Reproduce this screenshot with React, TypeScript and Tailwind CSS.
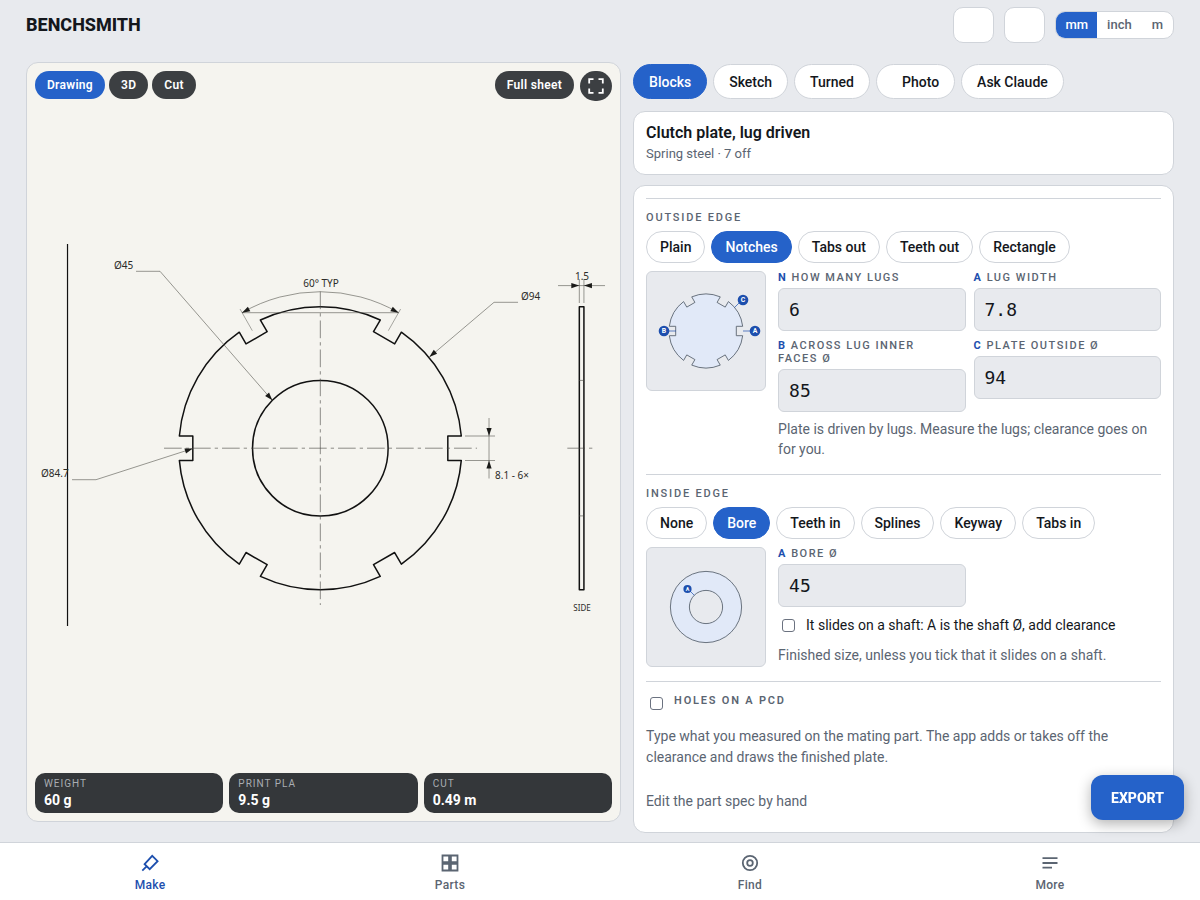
import * as React from 'react';
import { clsx } from 'clsx';

const NOTCH_ANGLES = [0, 60, 120, 180, 240, 300];

// Closed outline of a round plate with six square notches cut into the rim
function notchedPlate(cx: number, cy: number, outer: number, floor: number, half: number) {
  const rimX = Math.sqrt(outer * outer - half * half);
  const at = (x: number, y: number, deg: number) => {
    const a = (deg * Math.PI) / 180;
    const px = cx + x * Math.cos(a) - y * Math.sin(a);
    const py = cy + x * Math.sin(a) + y * Math.cos(a);
    return `${px.toFixed(2)} ${py.toFixed(2)}`;
  };

  const parts = NOTCH_ANGLES.map((deg, i) => {
    const enter = i === 0 ? `M${at(rimX, -half, deg)}` : `A${outer} ${outer} 0 0 1 ${at(rimX, -half, deg)}`;
    return `${enter}L${at(floor, -half, deg)}L${at(floor, half, deg)}L${at(rimX, half, deg)}`;
  });
  return `${parts.join('')}A${outer} ${outer} 0 0 1 ${at(rimX, -half, 0)}Z`;
}

function Arrow({ x, y, angle }: { x: number; y: number; angle: number }) {
  return <path d="M0 0L-8 -2.6L-8 2.6Z" fill="#1a1a18" transform={`translate(${x} ${y}) rotate(${angle})`} />;
}

function PlateDrawing() {
  return (
    <svg
      viewBox="35 101 577 672"
      className="min-h-0 w-full flex-1 overflow-visible"
      role="img"
      aria-label="Clutch plate drawing"
      fill="none"
    >
      <path d="M67.5 244V626" stroke="#111" strokeWidth="1.2" />

      {/* Face view */}
      <g stroke="#111" strokeWidth="1.5" strokeLinejoin="round">
        <path d={notchedPlate(320.3, 448.2, 141.5, 127.5, 12.2)} />
        <circle cx="320.3" cy="448.2" r="67.8" />
        <rect x="579.3" y="306.7" width="4.6" height="283" />
      </g>
      <g stroke="#44443f" strokeWidth="0.6">
        <path d="M579 380.4H584M579 515.9H584" />
        <path d="M164 448.2H477M320.3 291.5V605M567.3 448.2H592.7" strokeDasharray="17.7 4 3.3 4" />
      </g>

      {/* Dimension lines */}
      <g stroke="#55554f" strokeWidth="0.6">
        <path d="M242 312.7A156.5 156.5 0 0 1 398.6 312.7Z" />
        <path d="M240 309L252.3 330.7M400.6 309L388.3 330.7" strokeWidth="0.5" />
        <path d="M136 271.3H160L272 400" />
        <path d="M518 302.3H494L429.5 357" />
        <path d="M72 479.7H96L192.8 448.5" />
        <path d="M489 418V478.5M465 436H495M465 460.5H495" />
        <path d="M558 285.6H605M579.3 279V303M583.9 279V303" />
      </g>
      <Arrow x={242} y={312.7} angle={152} />
      <Arrow x={398.6} y={312.7} angle={28} />
      <Arrow x={272.3} y={400.3} angle={49} />
      <Arrow x={429.3} y={357} angle={140} />
      <Arrow x={192.8} y={448.5} angle={-18} />
      <Arrow x={489} y={436} angle={90} />
      <Arrow x={489} y={460.5} angle={-90} />
      <Arrow x={579.3} y={285.6} angle={0} />
      <Arrow x={583.9} y={285.6} angle={180} />

      <g fill="#2b2b28" fontFamily="'Noto Sans', sans-serif" fontSize="10">
        <text x="114" y="269">Ø45</text>
        <text x="321" y="287" textAnchor="middle">60° TYP</text>
        <text x="521" y="300">Ø94</text>
        <text x="41" y="477">Ø84.7</text>
        <text x="495" y="479">8.1 - 6×</text>
        <text x="582" y="280" textAnchor="middle">1.5</text>
        <text x="582" y="611" fontSize="8" textAnchor="middle">SIDE</text>
      </g>
    </svg>
  );
}

function Badge({ x, y, r, children }: { x: number; y: number; r: number; children: string }) {
  return (
    <>
      <circle cx={x} cy={y} r={r} fill="#1d4fae" />
      <text
        x={x}
        y={y + r * 0.45}
        fill="#fff"
        fontSize={r * 1.3}
        fontWeight="700"
        fontFamily="Roboto, sans-serif"
        textAnchor="middle"
      >
        {children}
      </text>
    </>
  );
}

function NotchDiagram() {
  return (
    <svg viewBox="0 0 118 118" className="size-full" role="img" aria-label="Notch dimensions">
      <path d={notchedPlate(59, 59, 37, 30.3, 4.7)} fill="#e1e9f8" stroke="#5b6572" strokeWidth="0.9" />
      <path d="M22 59H29M96 59H103M87.5 35.5L93 30" stroke="#1d4fae" strokeWidth="0.7" fill="none" />
      <Badge x={17} y={59} r={5.3}>B</Badge>
      <Badge x={108} y={59} r={5.3}>A</Badge>
      <Badge x={96} y={28} r={5.3}>C</Badge>
    </svg>
  );
}

function BoreDiagram() {
  return (
    <svg viewBox="0 0 118 118" className="size-full" role="img" aria-label="Bore dimensions">
      <circle cx="59" cy="59" r="35.6" fill="#e1e9f8" stroke="#5b6572" strokeWidth="0.9" />
      <circle cx="59" cy="59" r="16.6" fill="#e8eaee" stroke="#5b6572" strokeWidth="0.9" />
      <path d="M43 43L47.3 47.3" stroke="#1d4fae" strokeWidth="0.7" />
      <Badge x={40.5} y={41} r={4.1}>A</Badge>
    </svg>
  );
}

function ViewPill({ active, children }: { active?: boolean; children: React.ReactNode }) {
  return (
    <button
      type="button"
      className={clsx(
        'h-7 rounded-full px-3 text-xs font-semibold tracking-wide text-white',
        active ? 'bg-[#2562c9]' : 'bg-[#3c3f42]'
      )}
    >
      {children}
    </button>
  );
}

function Tab({ active, children }: { active?: boolean; children: React.ReactNode }) {
  return (
    <button
      type="button"
      className={clsx(
        'h-[35px] rounded-full border px-[15px] text-sm font-medium',
        active ? 'border-[#2562c9] bg-[#2562c9] text-white' : 'border-[#d0d4da] bg-white text-[#14171c]'
      )}
    >
      {children}
    </button>
  );
}

function ChipRow({ options, selected }: { options: string[]; selected: string }) {
  return (
    <div className="mt-[5px] flex flex-wrap gap-[6px]">
      {options.map((option) => (
        <button
          key={option}
          type="button"
          aria-pressed={option === selected}
          className={clsx(
            'h-8 rounded-full border px-[13px] text-sm font-medium',
            option === selected
              ? 'border-[#2562c9] bg-[#2562c9] text-white'
              : 'border-[#d0d4da] bg-white text-[#14171c]'
          )}
        >
          {option}
        </button>
      ))}
    </div>
  );
}

function Field({ id, mark, label, value }: { id: string; mark: string; label: string; value: string }) {
  return (
    <div>
      <label
        htmlFor={id}
        className="block text-[11px] leading-[13px] font-medium tracking-[1.5px] text-[#5b6572] uppercase"
      >
        <b className="font-bold text-[#1d4fae]">{mark}</b> {label}
      </label>
      <input
        id={id}
        type="text"
        inputMode="decimal"
        defaultValue={value}
        className="mt-1 block h-[43px] w-full rounded-md border border-[#d0d4da] bg-[#e8eaee] px-[10px] font-['DejaVu_Sans_Mono',monospace] text-lg text-[#14171c]"
      />
    </div>
  );
}

function SectionTitle({ children }: { children: React.ReactNode }) {
  return (
    <h3 className="text-[11px] leading-4 font-medium tracking-[1.8px] text-[#5b6572] uppercase">{children}</h3>
  );
}

const checkboxClass =
  'size-[13px] shrink-0 appearance-none rounded-[3px] border border-[#6b7280] bg-white checked:bg-[#2562c9]';

const stats = [
  { label: 'Weight', value: '60 g' },
  { label: 'Print PLA', value: '9.5 g' },
  { label: 'Cut', value: '0.49 m' },
];

function DrawingPanel() {
  return (
    <section className="flex h-[calc(100vh-140px)] flex-col rounded-xl border border-[#d0d4da] bg-[#f5f4ef] p-2">
      <div className="flex h-[30px] items-start justify-between">
        <div className="flex gap-1">
          <ViewPill active>Drawing</ViewPill>
          <ViewPill>3D</ViewPill>
          <ViewPill>Cut</ViewPill>
        </div>
        <div className="flex gap-[6px]">
          <ViewPill>Full sheet</ViewPill>
          <button
            type="button"
            aria-label="Fullscreen"
            className="flex h-[30px] w-8 items-center justify-center rounded-full bg-[#3c3f42] text-white"
          >
            <svg viewBox="0 0 16 16" className="size-4" fill="none" stroke="currentColor" strokeWidth="1.8">
              <path d="M1.2 5.5V1.2H5.5M10.5 1.2H14.8V5.5M14.8 10.5V14.8H10.5M5.5 14.8H1.2V10.5" />
            </svg>
          </button>
        </div>
      </div>

      <PlateDrawing />

      <dl className="grid grid-cols-3 gap-[6px]">
        {stats.map((stat) => (
          <div key={stat.label} className="h-10 rounded-[10px] bg-[#34373a] px-[9px] pt-1">
            <dt className="text-[10px] leading-[14px] tracking-widest text-[#a9adb2] uppercase">{stat.label}</dt>
            <dd className="text-sm leading-[18px] font-bold text-white">{stat.value}</dd>
          </div>
        ))}
      </dl>
    </section>
  );
}

function OutsideEdge() {
  return (
    <section className="border-t border-[#d0d4da] pt-[11px]">
      <SectionTitle>Outside edge</SectionTitle>
      <ChipRow options={['Plain', 'Notches', 'Tabs out', 'Teeth out', 'Rectangle']} selected="Notches" />
      <div className="mt-2 flex items-start gap-3">
        <div className="size-[120px] shrink-0 rounded-md border border-[#d0d4da] bg-[#e8eaee]">
          <NotchDiagram />
        </div>
        <div className="min-w-0 flex-1">
          <div className="grid grid-cols-2 gap-2">
            <Field id="lugs" mark="N" label="How many lugs" value="6" />
            <Field id="lug-width" mark="A" label="Lug width" value="7.8" />
            <Field id="lug-faces" mark="B" label={'Across lug inner faces\u00a0Ø'} value="85" />
            <Field id="plate-od" mark="C" label="Plate outside Ø" value="94" />
          </div>
          <p className="mt-[7px] text-sm leading-5 text-[#5b6572]">
            Plate is driven by lugs. Measure the lugs; clearance goes on for you.
          </p>
        </div>
      </div>
    </section>
  );
}

function InsideEdge() {
  return (
    <section className="mt-[15px] border-t border-[#d0d4da] pt-[11px]">
      <SectionTitle>Inside edge</SectionTitle>
      <ChipRow options={['None', 'Bore', 'Teeth in', 'Splines', 'Keyway', 'Tabs in']} selected="Bore" />
      <div className="mt-2 flex items-start gap-3">
        <div className="size-[120px] shrink-0 rounded-md border border-[#d0d4da] bg-[#e8eaee]">
          <BoreDiagram />
        </div>
        <div className="min-w-0 flex-1">
          <div className="grid grid-cols-2 gap-2">
            <Field id="bore" mark="A" label="Bore Ø" value="45" />
          </div>
          <label className="mt-2 flex items-center gap-[11px] pl-1 text-sm leading-5 text-[#14171c]">
            <input type="checkbox" className={checkboxClass} />
            It slides on a shaft: A is the shaft Ø, add clearance
          </label>
          <p className="mt-[10px] text-sm leading-5 text-[#5b6572]">
            Finished size, unless you tick that it slides on a shaft.
          </p>
        </div>
      </div>
    </section>
  );
}

function SpecPanel() {
  return (
    <div className="min-w-0 pt-[2px]">
      <div className="flex flex-wrap gap-[6px]">
        <Tab active>Blocks</Tab>
        <Tab>Sketch</Tab>
        <Tab>Turned</Tab>
        <Tab>
          <span className="pl-[10px]">Photo</span>
        </Tab>
        <Tab>Ask Claude</Tab>
      </div>

      <div className="mt-3 rounded-xl border border-[#d0d4da] bg-white px-3 py-[10px]">
        <h2 className="text-base leading-[22px] font-semibold text-[#14171c]">Clutch plate, lug driven</h2>
        <p className="text-[13px] leading-5 text-[#5b6572]">Spring steel · 7 off</p>
      </div>

      <div className="mt-[10px] rounded-xl border border-[#d0d4da] bg-white px-3 pt-3 pb-5">
        <OutsideEdge />
        <InsideEdge />
        <section className="mt-[14px] border-t border-[#d0d4da] pt-[11px]">
          <label className="flex items-start gap-[11px] pl-1">
            <input type="checkbox" className={clsx(checkboxClass, 'mt-1')} />
            <span className="text-[11px] leading-4 font-semibold tracking-[1.8px] text-[#5b6572] uppercase">
              Holes on a PCD
            </span>
          </label>
          <p className="mt-4 text-sm leading-[21px] text-[#5b6572]">
            Type what you measured on the mating part. The app adds or takes off the clearance and draws the finished
            plate.
          </p>
          <button type="button" className="mt-[23px] block text-sm leading-[21px] text-[#5b6572]">
            Edit the part spec by hand
          </button>
        </section>
      </div>
    </div>
  );
}

const navItems = [
  {
    label: 'Make',
    icon: <path d="M1.3 16.7L5.6 12.4M3.6 10.1L11.2 1.8L16.6 7.2L8.7 15.2Z" />,
  },
  {
    label: 'Parts',
    icon: <path d="M1.5 1.5H8.1V8.1H1.5ZM9.9 1.5H16.5V8.1H9.9ZM1.5 9.9H8.1V16.5H1.5ZM9.9 9.9H16.5V16.5H9.9Z" />,
  },
  {
    label: 'Find',
    icon: (
      <>
        <circle cx="9" cy="9" r="7.2" />
        <circle cx="9" cy="9" r="2.8" />
      </>
    ),
  },
  {
    label: 'More',
    icon: <path d="M1.5 4.2H16.5M1.5 9H16.5M1.5 13.6H11" />,
  },
];

function BottomNav() {
  return (
    <nav className="fixed inset-x-0 bottom-0 grid h-[58px] grid-cols-4 border-t border-[#d0d4da] bg-white">
      {navItems.map((item, i) => (
        <a
          key={item.label}
          href={`#${item.label.toLowerCase()}`}
          className={clsx(
            'flex flex-col items-center gap-[3px] pt-[11px] text-xs leading-5 font-medium tracking-wide',
            i === 0 ? 'text-[#1d4fae]' : 'text-[#5b6572]'
          )}
        >
          <svg viewBox="0 0 18 18" className="size-[18px]" fill="none" stroke="currentColor" strokeWidth="1.8">
            {item.icon}
          </svg>
          {item.label}
        </a>
      ))}
    </nav>
  );
}

function Header() {
  return (
    <header className="flex h-[50px] items-center justify-between px-[26px]">
      <h1 className="text-lg font-extrabold text-[#14171c]">BENCHSMITH</h1>
      <div className="flex items-center gap-[10px]">
        <button
          type="button"
          aria-label="Undo"
          className="h-9 w-[41px] rounded-[10px] border border-[#d0d4da] bg-white"
        />
        <button
          type="button"
          aria-label="Redo"
          className="h-9 w-[41px] rounded-[10px] border border-[#d0d4da] bg-white"
        />
        <div className="flex h-7 overflow-hidden rounded-[10px] border border-[#d0d4da] bg-white text-[13px] font-medium text-[#5b6572]">
          <button type="button" className="bg-[#2562c9] px-[9px] text-white">mm</button>
          <button type="button" className="px-[10px]">inch</button>
          <button type="button" className="px-[10px]">m</button>
        </div>
      </div>
    </header>
  );
}

export default function App() {
  return (
    <div className="min-h-screen bg-[#e8eaee] pb-[66px] font-[Roboto,sans-serif]">
      <Header />
      <main className="grid grid-cols-[1.1fr_1fr] items-start gap-3 px-[26px] pt-3">
        <DrawingPanel />
        <SpecPanel />
      </main>
      <button
        type="button"
        className="fixed right-4 bottom-20 z-10 h-[45px] rounded-xl bg-[#2562c9] px-5 text-sm font-extrabold text-white shadow-[0_4px_14px_rgba(0,0,0,0.3)]"
      >
        EXPORT
      </button>
      <BottomNav />
    </div>
  );
}
